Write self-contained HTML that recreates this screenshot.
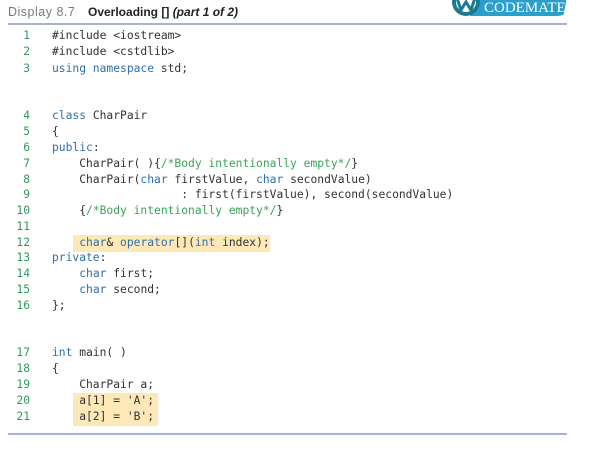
<!DOCTYPE html>
<html><head><style>
body{margin:0;width:602px;height:451px;background:#fff;position:relative;overflow:hidden;font-family:"Liberation Sans",sans-serif}
.t{position:absolute;top:5px;font-size:12.5px;white-space:nowrap}
.rule{position:absolute;left:8px;width:559px;height:1.5px;background:#a9b2d6}
.l{position:absolute;left:0;height:16px;line-height:16px;font-family:"DejaVu Sans Mono","Liberation Mono",monospace;font-size:11.3px;color:#333;white-space:pre}
.n{display:inline-block;width:30px;text-align:right;color:#2f9a5e;margin-right:22px}
.k{color:#2f6fae}.c{color:#3aa35a}
.hl{position:absolute;background:#fde9b8}
</style></head><body>
<div class="t" style="left:8px;color:#7a7a7a;letter-spacing:0.5px">Display 8.7</div>
<div class="t" style="left:88px;font-weight:bold;color:#222;font-size:12px">Overloading [] <i>(part 1 of 2)</i></div>
<svg style="position:absolute;left:440px;top:-12px" width="130" height="28">
<path d="M30 4 H120 Q128 4 126 14 L124 26 Q122 28 116 28 H30 Z" fill="#2a9fcb"/>
<circle cx="26" cy="14" r="14" fill="#1b7a92"/>
<circle cx="26" cy="14" r="10" fill="#fff"/>
<path d="M17 10 L21 22 L26 14 L31 22 L35 10" stroke="#1b7a92" stroke-width="3" fill="none"/>
<text x="44" y="24" font-family="Liberation Serif,serif" font-size="15" fill="#fff">CODEMATE</text>
</svg>
<div class="rule" style="top:23px"></div>
<div class="hl" style="left:73px;top:235px;width:197px;height:17px"></div>
<div class="hl" style="left:73px;top:393px;width:85px;height:33px"></div>
<div class="l" style="top:28px"><span class="n">1</span>#include &lt;iostream&gt;</div>
<div class="l" style="top:44px"><span class="n">2</span>#include &lt;cstdlib&gt;</div>
<div class="l" style="top:61px"><span class="n">3</span><span class="k">using namespace</span> std;</div>
<div class="l" style="top:108px"><span class="n">4</span><span class="k">class</span> CharPair</div>
<div class="l" style="top:124px"><span class="n">5</span>{</div>
<div class="l" style="top:140px"><span class="n">6</span><span class="k">public</span>:</div>
<div class="l" style="top:156px"><span class="n">7</span>    CharPair( ){<span class="c">/*Body intentionally empty*/</span>}</div>
<div class="l" style="top:172px"><span class="n">8</span>    CharPair(<span class="k">char</span> firstValue, <span class="k">char</span> secondValue)</div>
<div class="l" style="top:187px"><span class="n">9</span>                   : first(firstValue), second(secondValue)</div>
<div class="l" style="top:203px"><span class="n">10</span>    {<span class="c">/*Body intentionally empty*/</span>}</div>
<div class="l" style="top:219px"><span class="n">11</span></div>
<div class="l" style="top:235px"><span class="n">12</span>    <span class="k">char</span>&amp; <span class="k">operator</span>[](<span class="k">int</span> index);</div>
<div class="l" style="top:250px"><span class="n">13</span><span class="k">private</span>:</div>
<div class="l" style="top:266px"><span class="n">14</span>    <span class="k">char</span> first;</div>
<div class="l" style="top:282px"><span class="n">15</span>    <span class="k">char</span> second;</div>
<div class="l" style="top:298px"><span class="n">16</span>};</div>
<div class="l" style="top:345px"><span class="n">17</span><span class="k">int</span> main( )</div>
<div class="l" style="top:361px"><span class="n">18</span>{</div>
<div class="l" style="top:377px"><span class="n">19</span>    CharPair a;</div>
<div class="l" style="top:393px"><span class="n">20</span>    a[1] = 'A';</div>
<div class="l" style="top:409px"><span class="n">21</span>    a[2] = 'B';</div>
<div class="rule" style="top:433px"></div>
</body></html>
